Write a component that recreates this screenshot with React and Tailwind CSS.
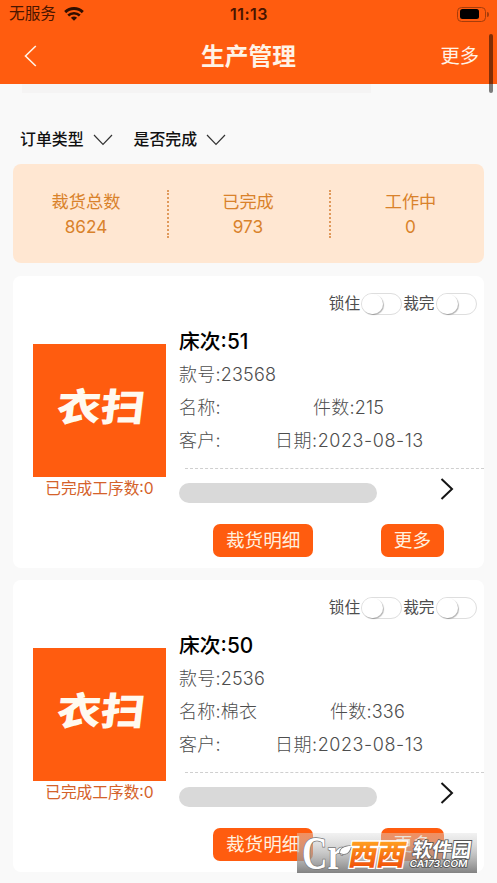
const filtros = ["订单类型", "是否完成"];

const totales = [
  { titulo: "裁货总数", valor: "8624" },
  { titulo: "已完成", valor: "973" },
  { titulo: "工作中", valor: "0" },
];

const columnas = [
  "w-[154px] pr-2",
  "w-[162px] border-l-2 border-dotted border-[#e09a5c] pr-0.5",
  "w-[155px] border-l-2 border-dotted border-[#e09a5c] pl-1.5",
];

const pedidos = [
  {
    cama: "51",
    modelo: "23568",
    nombre: "",
    piezas: "215",
    fecha: "2023-08-13",
    anchoNombre: "w-[134px]",
  },
  {
    cama: "50",
    modelo: "2536",
    nombre: "棉衣",
    piezas: "336",
    fecha: "2023-08-13",
    anchoNombre: "w-[151px]",
  },
];

function BarraEstado() {
  return (
    <div className="flex h-7 items-center justify-between pl-[9px] pr-2 text-[#4a1500]">
      <div className="flex w-40 items-center gap-2">
        <span className="text-[15.7px]">无服务</span>
        <svg width="20" height="14" viewBox="0 0 20 14" fill="none" stroke="#300e00">
          <path d="M1.2 5.1a12.6 12.6 0 0 1 17.6 0" strokeWidth="2.9" />
          <path d="M4.2 8.5a8.4 8.4 0 0 1 11.6 0" strokeWidth="2.6" />
          <path d="M6.9 10.8a4.6 4.6 0 0 1 6.2 0L10 13.8z" fill="#300e00" stroke="none" />
        </svg>
      </div>
      <span className="text-base font-semibold tracking-[0.5px]">11:13</span>
      <div className="flex w-40 items-center justify-end gap-px">
        <span className="h-[15px] w-[29px] rounded-[4.5px] border border-[#a63d0b] p-[1.5px]">
          <span className="block h-full w-[19px] rounded-[2.5px] bg-black" />
        </span>
        <span className="h-[5px] w-[1.5px] rounded-r bg-[#a63d0b]" />
      </div>
    </div>
  );
}

function Encabezado() {
  return (
    <header className="h-[84px] bg-[#ff5c0f]">
      <BarraEstado />
      <div className="flex h-[55px] items-center justify-between pl-6 pr-[18px] text-[#fff3e6]">
        <div className="w-20">
          <svg width="13" height="22" viewBox="0 0 13 22" fill="none" stroke="currentColor" strokeWidth="1.6">
            <path d="M11.8 1L1.5 11l10.3 10" />
          </svg>
        </div>
        <h1 className="pt-0.5 text-[23.7px] font-semibold">生产管理</h1>
        <span className="w-[86px] pt-px text-right text-[19.3px]">更多</span>
      </div>
    </header>
  );
}

function Interruptor({ texto }) {
  return (
    <div className="flex items-center gap-px">
      <span className="text-[15.7px] leading-5">{texto}</span>
      <span className="h-[22px] w-[41px] rounded-full border border-[#dedede] bg-white">
        <span className="block h-5 w-[21px] rounded-full bg-white shadow-[1px_1px_1px_rgba(0,0,0,0.3)]" />
      </span>
    </div>
  );
}

function Boton({ children }) {
  return (
    <button className="h-[33px] rounded-[7px] bg-[#ff5c0f] px-[13px] text-[18.6px] font-normal leading-[33px] text-[#fff0df]">
      {children}
    </button>
  );
}

function TarjetaPedido({ pedido }) {
  return (
    <article className="h-[292px] rounded-lg bg-white text-[#4d4d4d]">
      <div className="flex justify-end gap-px pr-[7.5px] pt-[17px]">
        <Interruptor texto="锁住" />
        <Interruptor texto="裁完" />
      </div>

      <div className="flex">
        <div className="ml-5 mt-[29px] w-[133px] shrink-0">
          <div className="flex h-[133px] items-center justify-center bg-[#ff5c0f]">
            <span className="-mt-2 ml-0.5 -skew-x-6 scale-y-[0.87] whitespace-nowrap text-[44px] font-black leading-none text-[#fffaf0]">
              衣扫
            </span>
          </div>
          <p className="text-center text-[15.7px] leading-6 text-[#d4622a]">
            已完成工序数:0
          </p>
        </div>

        <div className="ml-[13px] min-w-0 flex-1 pt-[10px] text-[18px] font-light">
          <h2 className="h-[33px] text-[20.8px] font-medium leading-[33px] text-black">
            床次:{pedido.cama}
          </h2>
          <p className="h-[33px] leading-[33px] tracking-[0.2px]">款号:{pedido.modelo}</p>
          <div className="flex h-[33px] leading-[33px]">
            <p className={`${pedido.anchoNombre} tracking-[0.2px]`}>名称:{pedido.nombre}</p>
            <p className="tracking-[0.2px]">件数:{pedido.piezas}</p>
          </div>
          <div className="flex h-[33px] leading-[33px]">
            <p className="w-24 tracking-[0.2px]">客户:</p>
            <p className="tracking-[0.55px]">日期:{pedido.fecha}</p>
          </div>
          <div className="ml-1.5 mt-[11px] border-t border-dashed border-[#cfcfcf]" />
          <div className="flex h-10 items-center justify-between pr-[30px]">
            <span className="mt-2 h-5 w-[198px] rounded-full bg-[#d9d9d9]" />
            <svg width="14" height="22" viewBox="0 0 14 22" fill="none" stroke="#151515" strokeWidth="2">
              <path d="M1.5 1L12 11 1.5 21" />
            </svg>
          </div>
          <div className="mt-[15px] flex justify-between pl-[34px] pr-10">
            <Boton>裁货明细</Boton>
            <Boton>更多</Boton>
          </div>
        </div>
      </div>
    </article>
  );
}

function MarcaAgua() {
  return (
    <svg className="absolute left-[297px] top-[833px] overflow-visible" width="180" height="40" viewBox="0 0 180 40">
      <defs>
        <linearGradient id="fondo" x1="0" y1="0" x2="0" y2="1">
          <stop offset="0" stopColor="#ddd" stopOpacity="0.4" />
          <stop offset="1" stopColor="#777" stopOpacity="0.92" />
        </linearGradient>
        <linearGradient id="naranja" x1="0" y1="0" x2="0" y2="1">
          <stop offset="0.1" stopColor="#ffa020" />
          <stop offset="0.9" stopColor="#f04c08" />
        </linearGradient>
      </defs>
      <rect width="180" height="40" fill="url(#fondo)" />
      <g fill="#fff" stroke="#777" strokeWidth="1.6" style={{ paintOrder: "stroke" }}>
        <text x="5" y="35.5" fontSize="46" fontWeight="700" fontFamily="Liberation Serif" textLength="41" lengthAdjust="spacingAndGlyphs">
          Cr
        </text>
        <path d="M43 20c0-5 5-7 11-7-1 6-5 10-11 7z" />
      </g>
      <g fill="url(#naranja)" stroke="#fff" strokeWidth="2.6" style={{ paintOrder: "stroke" }} transform="translate(5 0) skewX(-10)">
        <text x="51" y="32.5" fontSize="29" fontWeight="900" textLength="57">西西</text>
      </g>
      <g fill="#fff" stroke="#555" strokeWidth="1.6" style={{ paintOrder: "stroke" }} transform="translate(4 0) skewX(-8)">
        <text x="114" y="24" fontSize="20" fontWeight="700" textLength="59">软件园</text>
        <text x="113" y="34.5" fontSize="9.5" fontWeight="600" textLength="58" lengthAdjust="spacingAndGlyphs">
          CA173.COM
        </text>
      </g>
    </svg>
  );
}

function App() {
  return (
    <main className="relative h-[883px] w-[497px] overflow-hidden bg-[#f9f9f9] font-['Inter','Noto_Sans_CJK_SC',sans-serif]">
      <Encabezado />
      <div className="ml-[22px] h-[9px] w-[349px] bg-[#f5f4f4]" />

      <nav className="mt-[33px] flex h-7 items-center gap-[21px] pl-5 text-[15.9px] font-medium text-[#111]">
        {filtros.map((filtro) => (
          <span key={filtro} className="flex items-center gap-[9px]">
            {filtro}
            <svg width="20" height="12" viewBox="0 0 20 12" fill="none" stroke="#333" strokeWidth="1.2">
              <path d="M1 1l9 9.5L19 1" />
            </svg>
          </span>
        ))}
      </nav>

      <section className="mx-[13px] mt-[10px] flex h-[99px] items-center rounded-lg bg-[#ffe7d2] text-[#d9822b]">
        {totales.map((total, index) => (
          <div
            key={total.titulo}
            className={`flex h-12 shrink-0 flex-col items-center justify-center text-[17.2px] leading-[25px] ${columnas[index]}`}
          >
            <span>{total.titulo}</span>
            <span>{total.valor}</span>
          </div>
        ))}
      </section>

      <section className="mx-[13px] mt-[13px] flex flex-col gap-3">
        {pedidos.map((pedido) => (
          <TarjetaPedido key={pedido.cama} pedido={pedido} />
        ))}
      </section>

      <div className="absolute right-1 top-[34px] h-[59px] w-1 rounded-full bg-black/50" />
      <MarcaAgua />
    </main>
  );
}

export default App;
